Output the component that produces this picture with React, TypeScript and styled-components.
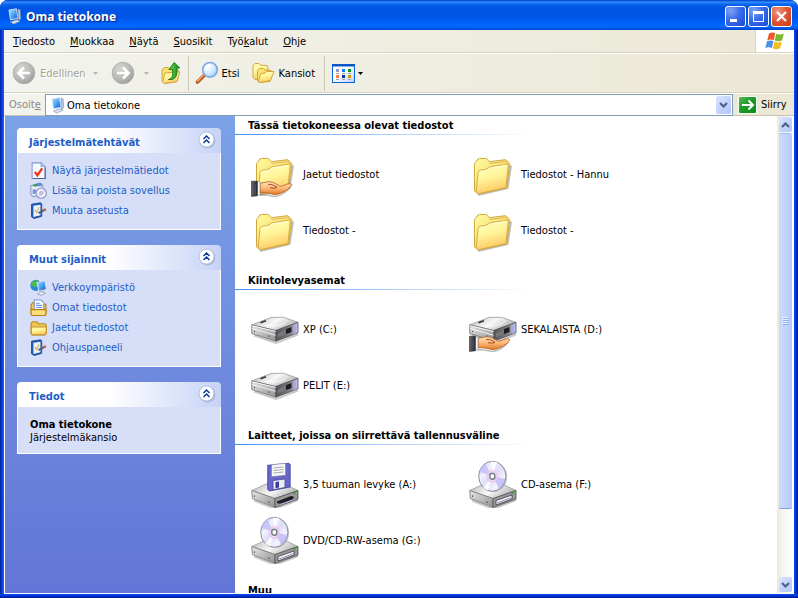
import React from "react";
import styled, { createGlobalStyle, css } from "styled-components";

const uiFont = '"DejaVu Sans Condensed", "Noto Sans", sans-serif';
const link = "#215dc6";
const fieldLine = "#7f9db9";

const GlobalStyle = createGlobalStyle`
  *, *::before, *::after { box-sizing: border-box; }
  body { margin: 0; background: #fff; font: 11px/13px ${uiFont}; color: #000; }
  button, input { font: inherit; color: inherit; }
  button { padding: 0; border: 0; background: none; }
  h1, h2, p, ul { margin: 0; padding: 0; list-style: none; }
  svg { display: block; flex: none; }
`;

/* ---------- window frame ---------- */

const WindowFrame = styled.main`
  display: flex;
  flex-direction: column;
  height: 100vh;
  padding: 0 4px 4px;
  overflow: hidden;
  border-radius: 8px 8px 0 0;
  background:
    linear-gradient(0deg, #00138c 0, #0031d4 2px, #0a4ff0 4px, transparent 4px),
    linear-gradient(90deg, #001ea0 0, #0a3fe0 2px, #1666f0 4px, transparent 4px),
    linear-gradient(270deg, #00138c 0, #0031d4 2px, #0a4ff0 4px, transparent 4px),
    #0055e5;
`;

const TitleBar = styled.header`
  display: flex;
  align-items: center;
  flex: none;
  gap: 4px;
  height: 30px;
  margin: 0 -4px;
  padding: 3px 6px 0 7px;
  background: linear-gradient(
    180deg,
    #0a4fd8 0, #0a4fd8 1px, #3f98ff 2px, #1a78f8 3px, #0862ee 5px, #0054e3 8px,
    #0055e5 16px, #005cf2 21px, #0068ff 25px, #0066fb 27px, #0050dc 29px, #0040c8 30px
  );
`;

const WindowTitle = styled.h1`
  flex: 1;
  color: #fff;
  font: bold 12px/16px "Noto Sans", "Open Sans", sans-serif;
  text-shadow: 1px 1px 1px #0a1f80;
`;

const CaptionButtons = styled.div`
  display: flex;
  gap: 2px;
`;

const CaptionButton = styled.button<{ $close?: boolean }>`
  width: 21px;
  height: 21px;
  border: 1px solid #fff;
  border-radius: 3px;
  background: ${(p) =>
    p.$close
      ? "radial-gradient(circle at 30% 25%, #f09a7c 0, #e2583a 45%, #c83a10 100%)"
      : "radial-gradient(circle at 25% 20%, #7fa4f4 0, #3a6cec 45%, #1c49d0 100%)"};
`;

/* ---------- menus and toolbars ---------- */

const bars = "linear-gradient(90deg, #f3f3ef 0, #efeee2 45%, #ece8d5 100%)";

const MenuBar = styled.nav`
  display: flex;
  flex: none;
  height: 23px;
  border-bottom: 1px solid #d8d2bd;
  background: ${bars};
`;

const MenuList = styled.ul`
  display: flex;
  flex: 1;
  align-items: center;
  gap: 15px;
  padding-left: 9px;
`;

const MenuButton = styled.button`
  white-space: nowrap;
`;

const Brand = styled.div`
  display: grid;
  place-items: center;
  width: 39px;
  border-left: 1px solid #d8d2bd;
  background: #fff;
`;

const ToolBar = styled.div`
  display: flex;
  align-items: center;
  flex: none;
  height: 40px;
  padding-left: 8px;
  border-top: 1px solid #fff;
  border-bottom: 1px solid #d8d2bd;
  background: ${bars};
`;

const ToolButton = styled.button<{ $gap: number; $after: number }>`
  display: flex;
  align-items: center;
  gap: ${(p) => p.$gap}px;
  margin-right: ${(p) => p.$after}px;
  white-space: nowrap;

  &:disabled {
    color: #a5a394;
    text-shadow: 1px 1px 0 #fff;
  }
`;

const Divider = styled.span<{ $after: number }>`
  width: 1px;
  height: 35px;
  margin-right: ${(p) => p.$after}px;
  background: #c9c7b2;
`;

const AddressBar = styled.form`
  display: flex;
  align-items: stretch;
  flex: none;
  height: 23px;
  border-top: 1px solid #fff;
  border-bottom: 1px solid #c9c4b2;
  background: ${bars};
`;

const AddressLabel = styled.label`
  display: flex;
  align-items: center;
  width: 41px;
  padding-left: 5px;
  color: #8c8a7c;
`;

const AddressField = styled.div`
  display: flex;
  flex: 1;
  align-items: center;
  gap: 2px;
  margin-bottom: -1px;
  padding: 0 1px 0 4px;
  border: 1px solid ${fieldLine};
  background: #fff;
`;

const AddressInput = styled.input`
  flex: 1;
  min-width: 0;
  height: 17px;
  padding: 0;
  border: 0;
  outline: 0;
  background: none;
`;

const blueButton = css`
  display: grid;
  place-items: center;
  border-radius: 2px;
  background: linear-gradient(135deg, #dbe6ff 0, #c3d3fd 50%, #b2c8fa 100%);
`;

const DropButton = styled.button`
  ${blueButton}
  width: 15px;
  height: 18px;
`;

const GoButton = styled.button`
  display: flex;
  align-items: center;
  gap: 4px;
  width: 61px;
  padding-left: 5px;
`;

const GoIcon = styled.span`
  display: grid;
  place-items: center;
  width: 19px;
  height: 18px;
  border: 1px solid #f4fff4;
  border-radius: 2px;
  background: linear-gradient(135deg, #5cb85c 0, #1f9a2c 45%, #0b8a14 100%);
`;

/* ---------- body ---------- */

const Body = styled.div`
  display: flex;
  flex: 1;
  min-height: 0;
  border: solid #fff;
  border-width: 0 1px 1px;
  background: #fff;
`;

const Sidebar = styled.aside`
  display: flex;
  flex-direction: column;
  flex: none;
  gap: 15px;
  width: 230px;
  padding: 12px 14px 12px 12px;
  background: linear-gradient(180deg, #7ba2e7 0, #6375d6 100%);
`;

const PanelHeader = styled.div`
  display: flex;
  align-items: flex-start;
  justify-content: space-between;
  height: 25px;
  padding: 0 3px 0 12px;
  border-radius: 4px 4px 0 0;
  background: linear-gradient(90deg, #fff 0, #fff 45%, #c6d3f7 100%);
`;

const PanelTitle = styled.h2`
  padding-top: 8px;
  color: ${link};
  font-size: 11px;
`;

const CollapseButton = styled.button`
  width: 22px;
  height: 22px;
`;

const PanelBody = styled.div<{ $info?: boolean }>`
  padding: ${(p) => (p.$info ? "11px 12px 9px" : "7px 12px 9px")};
  border: 1px solid #fff;
  border-top: 0;
  background: #d6dff7;
`;

const InfoName = styled.p`
  font-weight: bold;
`;

const TaskLink = styled.a`
  display: flex;
  align-items: center;
  gap: 5px;
  height: 20px;
  color: ${link};
  text-decoration: none;
  white-space: nowrap;
`;

const Content = styled.section`
  flex: 1;
  min-width: 0;
  overflow: hidden;
`;

const GroupTitle = styled.h2`
  height: 19px;
  padding: 3px 0 0 13px;
  font-size: 11px;
  line-height: 14px;
  white-space: nowrap;
  background: linear-gradient(90deg, #4a90f8 0, #a9ccfb 150px, #fff 300px) bottom / 100% 1px no-repeat;
`;

const ItemGrid = styled.div`
  display: grid;
  grid-template-columns: repeat(2, 218px);
  grid-auto-rows: 56px;
  padding: 11px 0 13px 16px;
`;

const ItemButton = styled.button`
  display: flex;
  align-items: center;
  gap: 4px;
  text-align: left;
  white-space: nowrap;
`;

const ScrollBar = styled.div`
  display: flex;
  flex-direction: column;
  flex: none;
  width: 16px;
  padding: 1px 1px 1px 2px;
  background: linear-gradient(90deg, #ece8dd 0, #f6f4ef 5px, #fefefb 100%);
`;

const ScrollButton = styled.button`
  ${blueButton}
  flex: none;
  width: 13px;
  height: 15px;
`;

const ScrollTrack = styled.div`
  display: flex;
  flex-direction: column;
  flex: 1;
  padding: 2px 0;
`;

const ScrollThumb = styled.div`
  display: grid;
  place-items: center;
  height: 85%;
  border-radius: 2px;
  border-bottom: 1px solid #7b9ee0;
  background: linear-gradient(90deg, #cbdafe 0, #c3d3fd 50%, #b4c9fa 100%);
  box-shadow: 0 -1px 0 #9db9ea;
`;

/* ---------- drawings ---------- */

const PaintDefs = () => (
  <svg width="0" height="0" aria-hidden="true">
    <defs>
      <linearGradient id="folderFront" x1="0" y1="0" x2="0.3" y2="1">
        <stop offset="0" stopColor="#fffdb4" />
        <stop offset="0.5" stopColor="#fff69c" />
        <stop offset="1" stopColor="#ffcb66" />
      </linearGradient>
      <linearGradient id="folderBack" x1="0" y1="0" x2="1" y2="1">
        <stop offset="0" stopColor="#fffca0" />
        <stop offset="1" stopColor="#f0c656" />
      </linearGradient>
      <linearGradient id="skin" x1="0" y1="0" x2="0" y2="1">
        <stop offset="0" stopColor="#ffe3bd" />
        <stop offset="0.5" stopColor="#fdb877" />
        <stop offset="1" stopColor="#e07a28" />
      </linearGradient>
      <linearGradient id="cuff" x1="0" y1="0" x2="1" y2="0">
        <stop offset="0" stopColor="#6a6a6e" />
        <stop offset="1" stopColor="#25252b" />
      </linearGradient>
      <linearGradient id="metalTop" x1="0" y1="0" x2="1" y2="0.4">
        <stop offset="0" stopColor="#b8b8b8" />
        <stop offset="0.55" stopColor="#f8f8f8" />
        <stop offset="1" stopColor="#b6b6b6" />
      </linearGradient>
      <linearGradient id="metalSide" x1="0" y1="0" x2="1" y2="1">
        <stop offset="0" stopColor="#e6e6e6" />
        <stop offset="1" stopColor="#929294" />
      </linearGradient>
      <linearGradient id="metalFace" x1="0" y1="0" x2="1" y2="0">
        <stop offset="0" stopColor="#555558" />
        <stop offset="0.65" stopColor="#808085" />
        <stop offset="1" stopColor="#c9c9f2" />
      </linearGradient>
      <linearGradient id="disc" x1="0" y1="0" x2="1" y2="1">
        <stop offset="0" stopColor="#c8c8f6" />
        <stop offset="0.3" stopColor="#f2f2ff" />
        <stop offset="0.5" stopColor="#dcdcf8" />
        <stop offset="0.75" stopColor="#f6f4ff" />
        <stop offset="1" stopColor="#b9b9ee" />
      </linearGradient>
      <linearGradient id="screen" x1="0" y1="0" x2="1" y2="1">
        <stop offset="0" stopColor="#b4e6ff" />
        <stop offset="0.5" stopColor="#48a4f4" />
        <stop offset="1" stopColor="#1a50c8" />
      </linearGradient>
      <radialGradient id="greyBall" cx="0.35" cy="0.3" r="0.8">
        <stop offset="0" stopColor="#d6d6d4" />
        <stop offset="0.6" stopColor="#b8b8b6" />
        <stop offset="1" stopColor="#989896" />
      </radialGradient>
      <linearGradient id="viewPane" x1="0" y1="0" x2="1" y2="1">
        <stop offset="0.4" stopColor="#ffffff" />
        <stop offset="1" stopColor="#b8d4fa" />
      </linearGradient>
      <radialGradient id="lens" cx="0.35" cy="0.3" r="0.8">
        <stop offset="0" stopColor="#ffffff" />
        <stop offset="0.6" stopColor="#cdeafd" />
        <stop offset="1" stopColor="#8cc4f4" />
      </radialGradient>
      <linearGradient id="upArrow" x1="0" y1="0" x2="1" y2="0">
        <stop offset="0" stopColor="#6fdc5c" />
        <stop offset="1" stopColor="#128a1c" />
      </linearGradient>
    </defs>
  </svg>
);

const FolderShape = () => (
  <g strokeLinejoin="round">
    <path d="M9 45 38.5 38 42 15.5" fill="none" stroke="#7c7c7c" strokeOpacity="0.5" strokeWidth="2" />
    <path d="M5.5 41V13.5L9 9l1.5-.6h6.8l3 3.3 16-2 3 2.3 1.6 2.5L37.5 38 9 44z" fill="url(#folderBack)" stroke="#d2a63c" />
    <path d="M20.5 13.5l16-2 1.5 1.5" fill="none" stroke="#e0b64c" />
    <path d="M7.2 42 9 22.5l1.5-2.3 6-.6 5-3L39.3 14 37 37.6 9 43.7z" fill="url(#folderFront)" stroke="#d8ac40" />
    <path d="M10.2 23.5l1-2 6-.6 5-3L38 15.4" fill="none" stroke="#fffde0" />
  </g>
);

const HandShape = () => (
  <g strokeLinejoin="round">
    <path d="M9 45c8-1 12 2 16 1.2 6-1 12-5 14.5-10" fill="none" stroke="#555" strokeOpacity="0.4" strokeWidth="1.5" />
    <path
      d="M9 33.4l7-1.5c4-.6 7 .6 10 2.6 2.5 1 2.5 2 4.500 1.600 3-.5 5.500-2.600 8-2.400 3 .3 2.600 1.800 1.200 3-3 3.500-9 6.800-14.500 7.700-4 .6-8-2.300-16-1.600z"
      fill="url(#skin)" stroke="#b4591c" strokeWidth="0.8"
    />
    <path d="M17 34.5c3-.8 6 .8 9 2.8-2 1.2-5 1-7 .2" fill="none" stroke="#9a3c10" strokeWidth="0.9" />
    <path d="M6.2 32 9 31.6v13.2l-2.8.5z" fill="#f4f6fa" stroke="#8c8c98" strokeWidth="0.6" />
    <path d="M.4 31.2h5.9v14.6L.4 46.4z" fill="url(#cuff)" stroke="#26262c" strokeWidth="0.6" />
    <path d="M4.3 35v9" stroke="#4c4c94" />
  </g>
);

const HardDiskShape = () => (
  <g strokeLinejoin="round">
    <path d="M3 30.5l22 7.5 22-8.5" fill="none" stroke="#777" strokeOpacity="0.4" strokeWidth="2" />
    <path d="M.8 19.8 20.5 12.3h12L47 17.3 24.8 25.5z" fill="url(#metalTop)" stroke="#9a9a9a" strokeWidth="0.8" />
    <path d="M.8 19.8 24.8 25.5v10.7L.8 28.5z" fill="url(#metalSide)" stroke="#6c6c6e" strokeWidth="0.8" />
    <path d="M24.8 25.5 42 19.2l5-1.8v10.4L24.8 36.2z" fill="url(#metalFace)" stroke="#4c4c50" strokeWidth="0.8" />
    <path d="M1.2 23.5 24.8 30.3M1.2 20.8 24.8 26.5" fill="none" stroke="#fafafa" strokeWidth="0.8" />
    <path d="M35 24l5.5-2v5L35 29z" fill="#1c1c20" />
    <path d="M27 28.5l7-3v4l-7 2.7z" fill="#77777a" />
    <path d="M43.5 19.5v9" stroke="#a6a6ee" strokeWidth="2" />
    <path d="M9.5 17.8l5.5-2" stroke="#333" strokeWidth="1.5" />
    <path d="M13.5 20c6 1.8 14 1 18-.8s6-4 2-5.2" fill="none" stroke="#fff" strokeOpacity="0.7" />
    <path d="M3.5 26v1M18 30.5v1.2" stroke="#333" />
  </g>
);

const TrayShape = () => (
  <g strokeLinejoin="round">
    <path d="M3 40.5l21 8.5 23-9" fill="none" stroke="#777" strokeOpacity="0.4" strokeWidth="2" />
    <path d="M.8 30.5 15 24h18l14 6.5L24 38.5z" fill="url(#metalTop)" stroke="#9a9a9a" strokeWidth="0.8" />
    <path d="M.8 30.5 24 38.5v9L1.3 38.5z" fill="url(#metalSide)" stroke="#777" strokeWidth="0.8" />
    <path d="M24 38.5 47 30.5v8.6L24 47.5z" fill="#98989a" stroke="#4c4c50" strokeWidth="0.8" />
    <path d="M3.5 35.5v1.2M18 41.5v1.3" stroke="#222" />
    <path d="M43.5 31.8v2.2" stroke="#2aa82a" strokeWidth="2" />
  </g>
);

const DiscShape = () => (
  <g>
    <ellipse cx="24.2" cy="16.8" rx="14" ry="15.3" fill="#777" fillOpacity="0.4" />
    <ellipse cx="23.3" cy="16.3" rx="13.6" ry="15" fill="url(#disc)" stroke="#8e8e9e" />
    <path d="M23.3 16.3 10.5 12c.8-4 3-7 5.5-9z" fill="#b8b8f4" fillOpacity="0.7" />
    <path d="M23.3 16.3 36.5 19c-.8 4.5-3 8-6 10z" fill="#a8a8f0" fillOpacity="0.6" />
    <path d="M23.3 16.3 22 1.6l6 .6zM23.3 16.3 14 28l5 2.5z" fill="#fff" fillOpacity="0.8" />
    <ellipse cx="23.3" cy="16.3" rx="5" ry="5.5" fill="none" stroke="#f0c6ee" strokeWidth="1.5" />
    <ellipse cx="23.3" cy="16.3" rx="2.6" ry="3" fill="#f6f6f6" stroke="#7c7c84" strokeWidth="1.4" />
  </g>
);

type ItemKind = "folder" | "sharedFolder" | "disk" | "sharedDisk" | "floppy" | "cd";

const ItemIcon = ({ kind }: { kind: ItemKind }) => (
  <svg width="48" height="48" viewBox="0 0 48 48" aria-hidden="true">
    {(kind === "folder" || kind === "sharedFolder") && <FolderShape />}
    {(kind === "disk" || kind === "sharedDisk") && <HardDiskShape />}
    {(kind === "sharedFolder" || kind === "sharedDisk") && <HandShape />}
    {kind === "cd" && (
      <>
        <TrayShape />
        <path d="M27 40.5l16-5.5v4l-16 6z" fill="#f6f6f6" stroke="#3c3c40" strokeWidth="0.8" />
        <path d="M28 43l14-5.2" stroke="#8c8ccc" />
        <DiscShape />
      </>
    )}
    {kind === "floppy" && (
      <>
        <TrayShape />
        <path d="M26 41.5l14-5.5 3 .8-1 2.5-12 4.5-4-.6z" fill="#1e1e22" />
        <path d="M29 44.5l14-5" stroke="#b4b4e8" />
        <path d="M16.7 5.3 38 3.3l1.2 1.2V27L18.5 31l-1.8-1.5z" fill="#6666cc" stroke="#3c3c94" strokeWidth="0.8" />
        <path d="M20.5 4.8l14-1.5v12l-14 1.5z" fill="#f6f6f4" stroke="#7c7ca8" strokeWidth="0.6" />
        <path d="M22.5 8 32.5 7M22.5 10.5l10-1M22.5 13l10-1" stroke="#a4a4ac" strokeWidth="0.9" />
        <path d="M22 20.5l12-1.5v8.5L22 29.8z" fill="#ececf4" stroke="#44448c" strokeWidth="0.8" />
        <path d="M24.5 22l3.5-.5v6l-3.5.8z" fill="#3a3aa0" />
      </>
    )}
  </svg>
);

const ComputerIcon = () => (
  <svg width="15" height="17" viewBox="0 0 15 17" aria-hidden="true">
    <path d="M2 2 9.5.8l1.5 9.5-7.5 1.5z" fill="url(#screen)" stroke="#c8dcf6" />
    <path d="M11 1l2.2.8.5 9-2.2 1.7z" fill="#b4c6e8" stroke="#7486b0" strokeWidth="0.5" />
    <path d="M3.5 14l6.5-2.2 3 1.4L6.5 16z" fill="#dde4f0" stroke="#8695b4" strokeWidth="0.7" />
  </svg>
);

const NavArrow = ({ forward }: { forward?: boolean }) => (
  <svg width="24" height="24" viewBox="0 0 24 24" aria-hidden="true">
    <circle cx="12" cy="12" r="10.8" fill="url(#greyBall)" stroke="#acacaa" strokeWidth="0.8" />
    <path
      d={forward ? "M6 12h11M12 6.5l5.5 5.5-5.5 5.5" : "M18 12h-11M12 6.5 6.5 12l5.5 5.5"}
      fill="none" stroke="#fff" strokeWidth="2.6"
    />
  </svg>
);

const Caret = ({ dark }: { dark?: boolean }) => (
  <svg width="5" height="3" viewBox="0 0 5 3" aria-hidden="true">
    <path d="M0 0h5L2.5 3z" fill={dark ? "#000" : "#b8b6a8"} />
  </svg>
);

const UpFolderIcon = () => (
  <svg width="20" height="24" viewBox="0 0 20 24" aria-hidden="true">
    <path d="M1 20V9l2-2.5h4L9 8l8 .5L18.5 11l-2.5 9.5L4 22.5z" fill="#fbe074" stroke="#d2a63c" />
    <path d="M1.5 21 4 12l13-1.2 1.5 1L16 20.5 3 22.5z" fill="url(#folderFront)" stroke="#d2a63c" />
    <path d="M7.5 18.5c4-.8 4.8-4.5 4-10H8L13.2 1.5 18.7 7h-3c1.2 7-1 12.5-8.2 11.5z" fill="url(#upArrow)" stroke="#0f7416" strokeWidth="0.9" />
  </svg>
);

const SearchIcon = () => (
  <svg width="24" height="24" viewBox="0 0 24 24" aria-hidden="true">
    <path d="M9 14.5 2.5 21" stroke="#b5561e" strokeWidth="3.6" strokeLinecap="round" />
    <path d="M8.5 14 2.5 20.2" stroke="#f4a468" strokeWidth="1.6" strokeLinecap="round" />
    <circle cx="15" cy="8.8" r="7.3" fill="url(#lens)" stroke="#7ea8e4" strokeWidth="1.6" />
    <path d="M10.5 8.5c.4-3 2.5-4.5 5-4.5" fill="none" stroke="#fff" strokeWidth="1.6" />
  </svg>
);

const FoldersIcon = () => (
  <svg width="23" height="22" viewBox="0 0 23 22" aria-hidden="true">
    <path d="M1 15V3.5L3 1.5h4l1.5 1.6 6.5.4 1 1.5-1 11-12 1.5z" fill="url(#folderFront)" stroke="#d2a63c" />
    <path d="M5.5 18.5V8.5l2-2h4L13 8l6 .4 1 2-2 9-11 1z" fill="#fbe074" stroke="#d2a63c" />
    <path d="M6 19.5 9 11.5l4-.5 1.5-1.5h7.5l-3.5 9L8 20.5z" fill="url(#folderFront)" stroke="#d2a63c" />
  </svg>
);

const ViewsIcon = () => (
  <svg width="24" height="19" viewBox="0 0 24 19" aria-hidden="true">
    <rect x="0.5" y="0.5" width="22" height="18" fill="url(#viewPane)" stroke="#0a63d8" />
    <path d="M0 0h23v2.5H0z" fill="#0a58c8" />
    <path d="M4 5h3v3H4z" fill="#9c96cc" />
    <path d="M10 5h3v3h-3z" fill="#1480ea" />
    <path d="M16 5h3v3h-3z" fill="#0c9414" />
    <path d="M4 11h3v3H4z" fill="#ff7c4c" />
    <path d="M10 11h3v3h-3z" fill="#0a349c" />
    <path d="M16 11h3v3h-3z" fill="#cc9a04" />
    <path d="M4 9.500h3m3 0h3m3 0h3M4 15.500h3m3 0h3m3 0h3" stroke="#a6a6a6" />
  </svg>
);

const FlagIcon = () => (
  <svg width="22" height="20" viewBox="0 0 22 20" aria-hidden="true">
    <path d="M5 2.5c2.5-1.4 4.5-1.2 6.2-.2L9.8 9.2C8 8.2 5.6 8.2 3.3 9.2z" fill="#ee5a28" />
    <path d="M12.2 2.8c2.5 1.2 5 .9 7.6-.3l-1.7 6.8c-2.4 1.2-5 1.2-7.4.2z" fill="#7ab82c" />
    <path d="M3 10.3c2.4-1 4.6-1 6.5 0l-1.6 6.8c-2-1.2-4.2-1.1-6.6-.1z" fill="#4a92e4" />
    <path d="M10.5 10.6c2.4 1.1 4.8 1 7.3-.1l-1.7 6.8c-2.5 1.2-5 1.1-7.3-.1z" fill="#f4bc1c" />
  </svg>
);

const Chevron = ({ up }: { up?: boolean }) => (
  <svg width="9" height="6" viewBox="0 0 9 6" aria-hidden="true">
    <path d={up ? "M1 5l3.5-3.5L8 5" : "M1 1l3.5 3.5L8 1"} fill="none" stroke="#4d6185" strokeWidth="2.2" />
  </svg>
);

const CollapseIcon = () => (
  <svg width="22" height="22" viewBox="0 0 22 22" aria-hidden="true">
    <circle cx="11.5" cy="12.5" r="8" fill="#8a94b8" fillOpacity="0.45" />
    <circle cx="10.5" cy="11.5" r="7.5" fill="#fff" stroke="#b4bede" />
    <path d="M7.5 11l3-3 3 3M7.5 15l3-3 3 3" fill="none" stroke="#0a3c9c" strokeWidth="1.5" />
  </svg>
);

type TaskKind = "sheet" | "programs" | "settings" | "network" | "documents" | "folder";

const taskArt: Record<TaskKind, React.ReactNode> = {
  sheet: (
    <>
      <path d="M2 .8h8.5L14 4v11.5H2z" fill="#f6f9ff" stroke="#7c98d0" />
      <path d="M10.5.8V4H14" fill="#c6d6f4" stroke="#7c98d0" />
      <path d="M14.5 5v10.5H3" fill="none" stroke="#3a4a78" strokeOpacity="0.7" />
      <path d="M4.5 9.5 7 12.5 11.5 6" fill="none" stroke="#ee3818" strokeWidth="2.2" />
    </>
  ),
  programs: (
    <>
      <path d="M.8 3.5 9 1l3 2v8L3.5 14 .8 12z" fill="#e6ebf8" stroke="#8c98c0" />
      <path d="M2 3l7-2 2.5 1.5-7 2z" fill="#3c9c58" />
      <path d="M2.5 7h3v4h-3z" fill="#6a8ee0" />
      <path d="M7 1h4v3H7z" fill="#5a8ae6" />
      <circle cx="10.5" cy="10.5" r="4.8" fill="url(#disc)" stroke="#8c8cc0" />
      <circle cx="10.5" cy="10.5" r="1.3" fill="#fff" stroke="#8484a8" strokeWidth="0.8" />
    </>
  ),
  settings: (
    <>
      <path d="M1.5 2 10 .8l1 1V13.5L4 15.5 1.5 14z" fill="#2460bc" stroke="#1a3c80" strokeWidth="0.8" />
      <path d="M3.2 3.5l6.6-1v10l-6.6 1.5z" fill="#e8f2ff" />
      <path d="M4.5 7.5 6.2 10 8.5 5" fill="none" stroke="#e8b848" strokeWidth="1.2" />
      <path d="M8 10.5 14.5 7" stroke="#48608c" strokeWidth="2" />
      <path d="M12.5 8l2.5-1.2" stroke="#c4643c" strokeWidth="2.2" />
    </>
  ),
  network: (
    <>
      <circle cx="5.5" cy="6" r="5.2" fill="#2c84dc" />
      <path d="M1.5 3.5C3 1.5 5 .8 7.5 1.2L6 4l1 2-2.5 2-1.5-1.5L1 7z" fill="#4cbc44" />
      <path d="M6.5 3.5 14 1.5l1.5 8.5-7 1.5z" fill="url(#screen)" stroke="#d8e2f2" />
      <path d="M9.5 12l2.5-.8v1.3l2.5.8-4 2.2-3.5-1.2z" fill="#dfe5f0" stroke="#8a98b8" strokeWidth="0.7" />
    </>
  ),
  documents: (
    <>
      <path d="M1 14V5.5l1.5-2h4L8 5h7v9.5l-1 1H2z" fill="#f4c64c" stroke="#b87f14" />
      <path d="M4 1h6.5L13 3.5V11H4z" fill="#fff" stroke="#7c94cc" />
      <path d="M5.5 4h4m-4 2h6m-6 2h6" stroke="#6a9ae6" />
      <path d="M1 10h14v4l-1 1.5H2L1 14z" fill="#fbdf7c" stroke="#b87f14" />
    </>
  ),
  folder: (
    <>
      <path d="M1 13.5V4L2.5 2.5h4L8 4.5h6l1.2 1.3v7.7L14 15H2z" fill="#f0c450" stroke="#b98a1c" />
      <path d="M1.2 14V7.5h14v6L14 14.8H2z" fill="url(#folderFront)" stroke="#c2942a" />
    </>
  ),
};

const TaskIcon = ({ kind }: { kind: TaskKind }) => (
  <svg width="17" height="17" viewBox="0 0 16 16" aria-hidden="true">
    {taskArt[kind]}
  </svg>
);

/* ---------- data ---------- */

const menus = [
  ["", "T", "iedosto"],
  ["", "M", "uokkaa"],
  ["", "N", "äytä"],
  ["", "S", "uosikit"],
  ["Työ", "k", "alut"],
  ["", "O", "hje"],
];

const panels: { title: string; tasks: [TaskKind, string][] }[] = [
  {
    title: "Järjestelmätehtävät",
    tasks: [
      ["sheet", "Näytä järjestelmätiedot"],
      ["programs", "Lisää tai poista sovellus"],
      ["settings", "Muuta asetusta"],
    ],
  },
  {
    title: "Muut sijainnit",
    tasks: [
      ["network", "Verkkoympäristö"],
      ["documents", "Omat tiedostot"],
      ["folder", "Jaetut tiedostot"],
      ["settings", "Ohjauspaneeli"],
    ],
  },
];

const groups: { title: string; items: [ItemKind, string][] }[] = [
  {
    title: "Tässä tietokoneessa olevat tiedostot",
    items: [
      ["sharedFolder", "Jaetut tiedostot"],
      ["folder", "Tiedostot - Hannu"],
      ["folder", "Tiedostot -"],
      ["folder", "Tiedostot -"],
    ],
  },
  {
    title: "Kiintolevyasemat",
    items: [
      ["disk", "XP (C:)"],
      ["sharedDisk", "SEKALAISTA (D:)"],
      ["disk", "PELIT (E:)"],
    ],
  },
  {
    title: "Laitteet, joissa on siirrettävä tallennusväline",
    items: [
      ["floppy", "3,5 tuuman levyke (A:)"],
      ["cd", "CD-asema (F:)"],
      ["cd", "DVD/CD-RW-asema (G:)"],
    ],
  },
  { title: "Muu", items: [] },
];

/* ---------- page ---------- */

const Panel = ({ title, info, children }: { title: string; info?: boolean; children: React.ReactNode }) => (
  <section>
    <PanelHeader>
      <PanelTitle>{title}</PanelTitle>
      <CollapseButton type="button" aria-label={title}>
        <CollapseIcon />
      </CollapseButton>
    </PanelHeader>
    <PanelBody $info={info}>{children}</PanelBody>
  </section>
);

export default function App() {
  return (
    <WindowFrame>
      <GlobalStyle />
      <PaintDefs />
      <TitleBar>
        <ComputerIcon />
        <WindowTitle>Oma tietokone</WindowTitle>
        <CaptionButtons>
          <CaptionButton type="button" aria-label="Pienennä">
            <svg width="19" height="19" viewBox="0 0 19 19"><path d="M4 12h7v3H4z" fill="#fff" /></svg>
          </CaptionButton>
          <CaptionButton type="button" aria-label="Suurenna">
            <svg width="19" height="19" viewBox="0 0 19 19">
              <path d="M4.5 5.5h10v9h-10z" fill="none" stroke="#fff" /><path d="M4 4h11v3H4z" fill="#fff" />
            </svg>
          </CaptionButton>
          <CaptionButton type="button" aria-label="Sulje" $close>
            <svg width="19" height="19" viewBox="0 0 19 19"><path d="M5 5l9 9M14 5l-9 9" stroke="#fff" strokeWidth="2.2" /></svg>
          </CaptionButton>
        </CaptionButtons>
      </TitleBar>

      <MenuBar>
        <MenuList>
          {menus.map(([before, key, after]) => (
            <li key={after}>
              <MenuButton type="button">{before}<u>{key}</u>{after}</MenuButton>
            </li>
          ))}
        </MenuList>
        <Brand><FlagIcon /></Brand>
      </MenuBar>

      <ToolBar>
        <ToolButton type="button" disabled $gap={4} $after={7}><NavArrow />Edellinen</ToolButton>
        <ToolButton type="button" disabled $gap={0} $after={13} aria-label="Edellisten luettelo"><Caret /></ToolButton>
        <ToolButton type="button" disabled $gap={9} $after={12} aria-label="Seuraava"><NavArrow forward /><Caret /></ToolButton>
        <ToolButton type="button" $gap={0} $after={7} aria-label="Ylös"><UpFolderIcon /></ToolButton>
        <Divider $after={6} />
        <ToolButton type="button" $gap={3} $after={12}><SearchIcon />Etsi</ToolButton>
        <ToolButton type="button" $gap={4} $after={9}><FoldersIcon />Kansiot</ToolButton>
        <Divider $after={7} />
        <ToolButton type="button" $gap={2} $after={0} aria-label="Näkymät"><ViewsIcon /><Caret dark /></ToolButton>
      </ToolBar>

      <AddressBar onSubmit={(e) => e.preventDefault()}>
        <AddressLabel htmlFor="address"><span>Osoit<u>e</u></span></AddressLabel>
        <AddressField>
          <ComputerIcon />
          <AddressInput id="address" defaultValue="Oma tietokone" />
          <DropButton type="button" aria-label="Avaa luettelo"><Chevron /></DropButton>
        </AddressField>
        <GoButton type="submit">
          <GoIcon>
            <svg width="14" height="12" viewBox="0 0 14 12" aria-hidden="true">
              <path d="M1 6h11M7.5 1.5 12 6l-4.5 4.5" fill="none" stroke="#fff" strokeWidth="2" />
            </svg>
          </GoIcon>
          Siirry
        </GoButton>
      </AddressBar>

      <Body>
        <Sidebar>
          {panels.map((panel) => (
            <Panel key={panel.title} title={panel.title}>
              {panel.tasks.map(([kind, label]) => (
                <TaskLink key={label} href="#"><TaskIcon kind={kind} />{label}</TaskLink>
              ))}
            </Panel>
          ))}
          <Panel title="Tiedot" info>
            <InfoName>Oma tietokone</InfoName>
            <p>Järjestelmäkansio</p>
          </Panel>
        </Sidebar>

        <Content>
          {groups.map((group) => (
            <React.Fragment key={group.title}>
              <GroupTitle>{group.title}</GroupTitle>
              {group.items.length > 0 && (
                <ItemGrid>
                  {group.items.map(([kind, label], i) => (
                    <ItemButton type="button" key={i}><ItemIcon kind={kind} />{label}</ItemButton>
                  ))}
                </ItemGrid>
              )}
            </React.Fragment>
          ))}
        </Content>

        <ScrollBar>
          <ScrollButton type="button" aria-label="Vieritä ylös"><Chevron up /></ScrollButton>
          <ScrollTrack>
            <ScrollThumb>
              <svg width="7" height="8" viewBox="0 0 7 8" aria-hidden="true">
                <path d="M0 .5h6m-6 2h6m-6 2h6m-6 2h6" stroke="#eef4fe" />
                <path d="M1 1.5h6m-6 2h6m-6 2h6m-6 2h6" stroke="#8cb0f8" />
              </svg>
            </ScrollThumb>
          </ScrollTrack>
          <ScrollButton type="button" aria-label="Vieritä alas"><Chevron /></ScrollButton>
        </ScrollBar>
      </Body>
    </WindowFrame>
  );
}
